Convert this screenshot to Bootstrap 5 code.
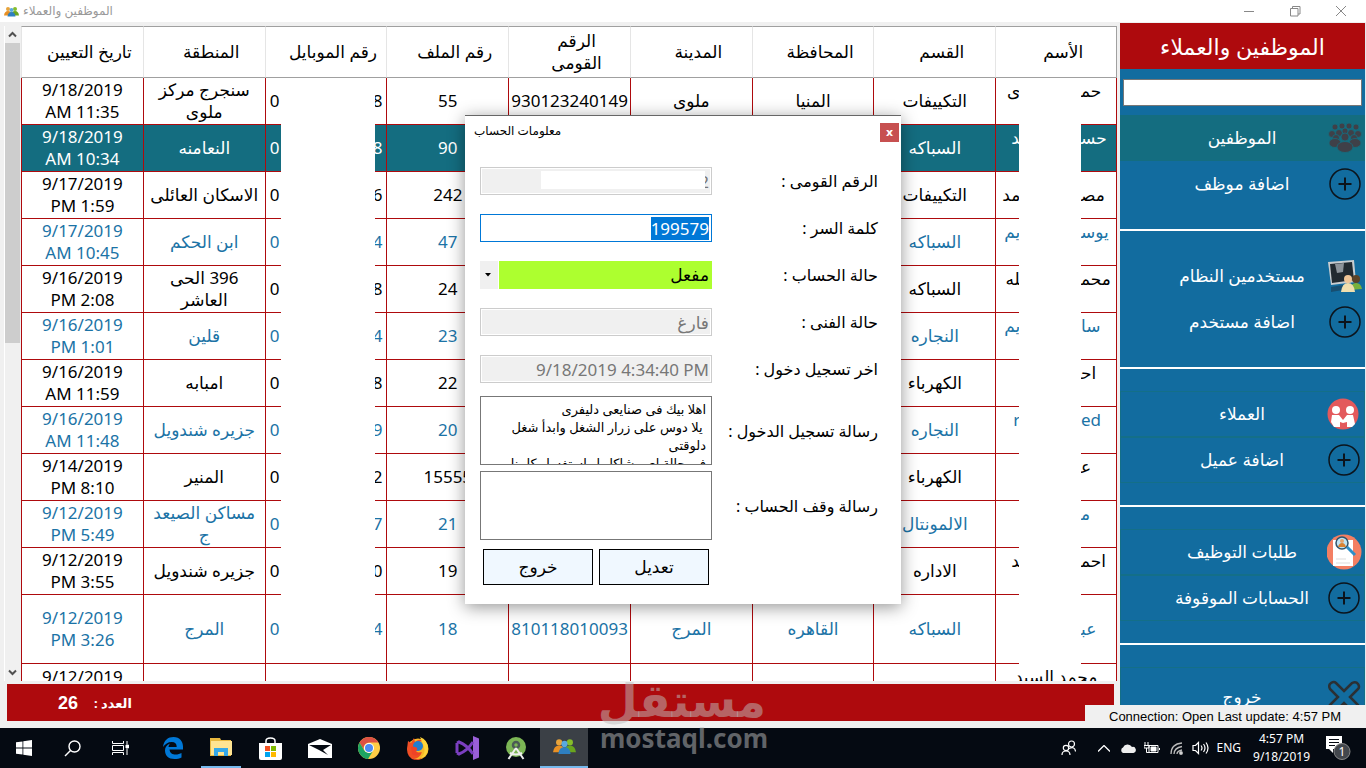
<!DOCTYPE html>
<html lang="ar">
<head>
<meta charset="utf-8">
<meta name="viewport" content="width=device-width, initial-scale=1">
<title>الموظفين والعملاء</title>
<link href="https://cdn.jsdelivr.net/npm/bootstrap@5.3.0/dist/css/bootstrap.min.css" rel="stylesheet">
<style>
:root{--brand-red:#ae0a0d;--brand-blue:#126c9f;--brand-teal:#146d80;--chrome:#f0f0f0}
body{font-family:"Noto Sans","DejaVu Sans",sans-serif;font-size:16px;line-height:22px;background:var(--chrome);color:#000}
svg{display:block;flex:none}
.title-bar{height:23px;background:#fff;color:#999;font-size:12px}
.title-bar button{width:46px;height:22px;border:0;background:none;padding:0;color:#888}
.window-buttons{padding-right:2px}
.workspace{padding-left:4px}
.grid-pane{padding-top:4px}
.scroll-rail{width:17px;border-left:1px solid #fff;background:var(--chrome);flex:none}
.scroll-rail button{border:0;background:none;padding:0;width:15px;height:17px;color:#505050}
.scroll-thumb{width:15px;height:300px;background:#cdcdcd}
.grid-box{background:#fff;min-width:0;margin-right:3px}
.staff-table{table-layout:fixed;width:100%;border-collapse:separate;border-spacing:0}
.staff-table th{height:52px;font-weight:400;font-size:17px;line-height:22px;padding:0 8px 0 22px;text-align:center;border-top:1px solid #a0a0a0;border-bottom:1px solid #a0a0a0;border-left:1px solid #e5e5e5}
.staff-table td{height:47px;padding:0 4px;font-size:17px;line-height:22px;text-align:center;vertical-align:middle;overflow:hidden;border-bottom:1px solid var(--brand-red);border-left:1px solid var(--brand-red)}
.staff-table th:first-child{border-right:1px solid #a0a0a0}
.staff-table td:first-child{border-right:1px solid var(--brand-red)}
.staff-table tr:nth-child(even) td{color:#1b73a6}
.staff-table tr.picked td{background:var(--brand-teal);color:#fff}
.staff-table tr.roomy td{height:69px}
.staff-table td.fit,.staff-table td.name-cell{padding:0;white-space:nowrap}
.staff-table td.upper,.staff-table tr.final td{vertical-align:top;padding-top:2px}
.name-end{width:35px;text-align:left}
.name-start{width:24px;text-align:right}
.masked{position:absolute;background:#fff}
.masked-phone{left:260px;width:94px;top:60px;bottom:22px}
.masked-name{right:36px;width:62px;top:58px;bottom:12px}
.count-bar{flex:none;margin:3px 6px 7px 3px;height:37px;background:var(--brand-red);color:#fff;font-weight:700;padding-left:51px}
.count-bar output{font:700 18px/22px "Liberation Sans",sans-serif}
.count-bar label{font-size:13px}
.side-pane{width:246px;margin-top:1px;background:var(--brand-blue);border-right:1px solid #dfe8ee}
.side-pane h1{height:46px;line-height:46px;font-size:22px;font-weight:400;background:var(--brand-red);color:#fff}
.side-search{width:calc(100% - 6px);height:27px;border:1px solid #777;margin:10px 3px 9px;display:block}
.side-group{padding-bottom:22px;border-bottom:2px solid #fff}
.side-group + .side-group{padding-top:22px}
.side-link{height:46px;color:#fff;text-decoration:none;font-size:17px;border:1px solid transparent}
.side-link:hover{color:#fff}
.side-link.on{background:var(--brand-teal)}
.side-link.lined{border-color:#146f88}
.side-link span{flex:1;text-align:center;padding-right:2px}
.side-link svg{width:36px;margin-right:1px}
.side-link::after{content:"";width:38px}
.side-exit{height:60px;margin-top:22px}
.status-note{position:absolute;right:0;bottom:0;height:23px;padding:0 25px 0 24px;background:var(--chrome);font:13px/23px "Liberation Sans",sans-serif}
.account-layer{position:absolute;inset:115px 0 auto 0;pointer-events:none}
.account-box{pointer-events:auto;width:436px;background:#fff;border-top:1px solid #666;box-shadow:0 3px 16px rgba(0,0,0,.42);padding:7px 0 19px}
.account-head{height:44px;padding-left:9px}
.account-head h2{font-size:12px;line-height:16px;font-weight:400}
.account-head button{width:19px;height:19px;background:#c75050;color:#fff;border:0;padding:0;margin-right:2px;font:700 11px/16px "DejaVu Sans",sans-serif}
.account-form{padding:0 23px 0 15px}
.field-row{display:grid;grid-template-columns:minmax(0,1fr) 232px;align-items:center;margin-bottom:19px}
.field-row.snug{margin-bottom:13px}
.field-row.tall{margin-bottom:6px}
.field-row label{font-size:16px;white-space:nowrap}
.field-row input,.field-row select{width:100%;height:28px;border:1px solid #ccc;border-radius:0;padding:0 2px;font-size:17px;line-height:22px;outline:0;text-align:right}
.field-row input:disabled{background:#f0f0f0;color:#777;box-shadow:inset 0 0 0 1px #fff}
.field-row input.live{border-color:#0078d7}
.field-row input::selection{background:#0078d7;color:#fff}
.field-row select{appearance:none;border:0;background:#adff2f;border-left:18px solid var(--chrome);padding:0 3px;box-shadow:inset 1px 0 #fff}
.field-row textarea{width:100%;height:69px;border:1px solid #777;border-radius:0;resize:none;overflow:hidden;padding:3px 5px;font-size:13px;line-height:18px;display:block}
.hidden-digits{position:absolute;background:#fff;left:61px;right:7px;top:4px;height:18px}
.pick-arrow{position:absolute;left:5px;top:12px}
.act-row{gap:6px;padding:3px 0 0 3px}
.account-form .act{width:110px;height:36px;border:1px solid #000;background:#f0f8ff;font-size:17px}
.task-bar{height:40px;background:#050a12;color:#fff;font:12px/18px "Noto Sans",sans-serif}
.task-bar button{width:49px;height:40px;border:0;background:none;padding:0;color:#fff;display:flex;align-items:center;justify-content:center}
.task-bar button.shell{width:48px}
.task-bar button.open{width:40px;margin:0 5px 0 4px;border-bottom:2px solid #76b9ed}
.task-bar button.current{width:48px;background:#3b4046;border-bottom:2px solid #76b9ed}
.task-bar .tray button{width:24px}
.watermark{position:absolute;left:600px;bottom:16px;width:166px;color:rgba(190,190,190,.5);pointer-events:none;font-weight:700}
.watermark .wm-ar{font-size:46px;line-height:50px}
.watermark .wm-en{font:700 26px/28px "Noto Sans",sans-serif}
</style>
</head>
<body class="vh-100 d-flex flex-column overflow-hidden position-relative">

<header class="title-bar d-flex align-items-center">
  <svg class="ms-1" width="15" height="11" viewBox="0 0 30 20"><circle cx="8" cy="5" r="4" fill="#e8a33a"/><path d="M0 18q1-9 8-9t8 9z" fill="#e89024"/><circle cx="22" cy="5" r="4" fill="#86bd2a"/><path d="M14 18q1-9 8-9t8 9z" fill="#6aa51e"/><circle cx="15" cy="7" r="4" fill="#5aa9de"/><path d="M7 20q1-9 8-9t8 9z" fill="#2e7fc0"/></svg>
  <span class="ms-1" dir="rtl">الموظفين والعملاء</span>
  <div class="window-buttons ms-auto d-flex">
    <button aria-label="تصغير"><svg class="mx-auto" width="10" height="10"><path d="M0 5.500h10" stroke="currentColor"/></svg></button>
    <button aria-label="استعادة"><svg class="mx-auto" width="11" height="11" fill="none" stroke="currentColor"><path d="M.5 2.500h7.500v7.500H.5zM2.500 2.500v-2h7.500v7.500H8"/></svg></button>
    <button aria-label="اغلاق"><svg class="mx-auto" width="10" height="10" stroke="currentColor"><path d="M0 0l10 10M10 0L0 10"/></svg></button>
  </div>
</header>

<main class="workspace flex-grow-1 d-flex overflow-hidden position-relative">
  <section class="grid-pane flex-grow-1 d-flex flex-column overflow-hidden">
    <div class="d-flex flex-grow-1 overflow-hidden">
      <div class="scroll-rail d-flex flex-column">
        <button aria-label="اعلى"><svg class="mx-auto" width="9" height="7" fill="none" stroke="currentColor" stroke-width="2"><path d="M1 5.500l3.500-3.500L8 5.500"/></svg></button>
        <div class="scroll-thumb"></div>
        <button class="mt-auto" aria-label="اسفل"><svg class="mx-auto" width="9" height="7" fill="none" stroke="currentColor" stroke-width="2"><path d="M1 1.500L4.500 5 8 1.500"/></svg></button>
      </div>
      <div class="grid-box flex-grow-1 overflow-hidden position-relative">
        <table class="staff-table" dir="rtl">
          <thead><tr><th>الأسم</th><th>القسم</th><th>المحافظة</th><th>المدينة</th><th>الرقم القومى</th><th>رقم الملف</th><th>رقم الموبايل</th><th>المنطقة</th><th>تاريخ التعيين</th></tr></thead>
          <tbody id="staff"></tbody>
        </table>
        <div class="masked masked-phone"></div>
        <div class="masked masked-name"></div>
      </div>
    </div>
    <div class="count-bar d-flex align-items-center">
      <output id="total">26</output>
      <label for="total" class="ms-3" dir="rtl">العدد :</label>
    </div>
  </section>

  <aside class="side-pane flex-shrink-0 overflow-hidden" dir="rtl">
    <h1 class="m-0 text-center">الموظفين والعملاء</h1>
    <input class="side-search" type="text" aria-label="بحث">
    <nav>
      <div class="side-group">
        <a href="#" class="side-link on d-flex align-items-center"><svg height="30" viewBox="0 0 36 30" fill="#3f4048" stroke="#146d80" stroke-width=".8"><circle cx="8" cy="4" r="3"/><circle cx="15" cy="3" r="3"/><circle cx="22" cy="3" r="3"/><circle cx="29" cy="4" r="3"/><circle cx="5" cy="11" r="3.500"/><circle cx="12" cy="10" r="3.500"/><circle cx="24" cy="10" r="3.500"/><circle cx="31" cy="11" r="3.500"/><circle cx="18" cy="8" r="3"/><circle cx="18" cy="14" r="4"/><circle cx="9" cy="15" r="3.500"/><circle cx="27" cy="15" r="3.500"/><ellipse cx="8" cy="20" rx="6" ry="4.500"/><ellipse cx="28" cy="20" rx="6" ry="4.500"/><ellipse cx="18" cy="24" rx="8" ry="5.500"/></svg><span>الموظفين</span></a>
        <a href="#" class="side-link d-flex align-items-center"><svg height="32" viewBox="0 0 36 32" fill="none" stroke="#0c141c" stroke-width="1.500"><circle cx="18" cy="16" r="15"/><path d="M18 9.500v13M11.500 16h13" stroke-width="2"/></svg><span>اضافة موظف</span></a>
      </div>
      <div class="side-group">
        <a href="#" class="side-link d-flex align-items-center"><svg height="34" viewBox="0 0 36 34"><path d="M1 3l26-2 2 22-25 3z" fill="#c8cdd0"/><path d="M3 5l22-2 2 18-22 3z" fill="#222a30"/><path d="M8 5l9-1-1 9-6 1z" fill="#8d949a"/><path d="M4 28l12-2v5l-12 2z" fill="#174e70"/><circle cx="29" cy="20" r="4" fill="#5c4328"/><path d="M23 31q1-7 6-7t6 6z" fill="#79b23c"/><circle cx="21" cy="20" r="4" fill="#efc596"/><path d="M14 33q1-9 7-9t7 9z" fill="#f0dfae"/></svg><span>مستخدمين النظام</span></a>
        <a href="#" class="side-link d-flex align-items-center"><svg height="32" viewBox="0 0 36 32" fill="none" stroke="#0c141c" stroke-width="1.500"><circle cx="18" cy="16" r="15"/><path d="M18 9.500v13M11.500 16h13" stroke-width="2"/></svg><span>اضافة مستخدم</span></a>
      </div>
      <div class="side-group">
        <a href="#" class="side-link lined d-flex align-items-center"><svg height="32" viewBox="0 0 36 32"><circle cx="16" cy="16" r="15.500" fill="#e3595c"/><g fill="#fff"><circle cx="9" cy="12" r="4"/><circle cx="23" cy="12" r="4"/><path d="M5 17h7l4 5 4-5h6l2 9-3 3h-5v-5l-4 1-3-1v5H7l-3-5z"/></g></svg><span>العملاء</span></a>
        <a href="#" class="side-link lined d-flex align-items-center"><svg height="32" viewBox="0 0 36 32" fill="none" stroke="#0c141c" stroke-width="1.500"><circle cx="17" cy="16" r="15"/><path d="M17 9.500v13M10.500 16h13" stroke-width="2"/></svg><span>اضافة عميل</span></a>
      </div>
      <div class="side-group">
        <a href="#" class="side-link lined d-flex align-items-center"><svg height="36" viewBox="0 0 36 36"><circle cx="17" cy="18" r="17.500" fill="#f37f63"/><path d="M6 6h20v26H6z" fill="#fff"/><path d="M9 25h10M9 29h14" stroke="#ddd"/><circle cx="15" cy="9" r="6" fill="#bfe4f4" stroke="#31536b" stroke-width="1.500"/><circle cx="15" cy="7" r="2" fill="#e5a36d"/><path d="M11 13q1-4 4-4t4 4z" fill="#d98232"/><path d="M20 13l8 8" stroke="#2c8fc9" stroke-width="3"/></svg><span>طلبات التوظيف</span></a>
        <a href="#" class="side-link lined d-flex align-items-center"><svg height="32" viewBox="0 0 36 32" fill="none" stroke="#0c141c" stroke-width="1.500"><circle cx="17" cy="16" r="15"/><path d="M17 9.500v13M10.500 16h13" stroke-width="2"/></svg><span>الحسابات الموقوفة</span></a>
      </div>
      <a href="#" class="side-link lined side-exit d-flex align-items-center"><svg height="34" viewBox="0 0 36 34" fill="none" stroke="#2b3034" stroke-width="2.500"><path d="M17 11l8-8q4-2 6 1t0 5l-8 8 8 8q2 4-1 6t-5 0l-8-8-8 8q-4 2-6-1t0-5l8-8-8-8q-2-4 1-6t5 0z"/></svg><span>خروج</span></a>
    </nav>
  </aside>
  <div class="status-note">Connection: Open Last update: 4:57 PM</div>
</main>

<footer class="task-bar d-flex align-items-center flex-shrink-0">
  <button class="shell" aria-label="Start"><svg width="16" height="16" fill="#fff"><path d="M0 2.300L6.500 1.400V7.600H0zM7.300 1.300L16 0v7.600H7.300zM0 8.400h6.500v6.200L0 13.700zM7.300 8.400H16V16l-8.700-1.300z"/></svg></button>
  <button class="shell" aria-label="Search"><svg width="17" height="17" fill="none" stroke="#fff" stroke-width="1.400"><circle cx="10.500" cy="6.500" r="5.500"/><path d="M6.500 10.500L1 16"/></svg></button>
  <button class="shell" aria-label="Task view"><svg width="17" height="16" fill="none" stroke="#fff"><path d="M.5 1v2.500h11V1M.5 15v-2.500h11V15M.5 5.500h11v5H.5zM15 1v3M15 9v6"/><path d="M14 5h2.500v3H14z" fill="#fff"/></svg></button>
  <button class="ms-1" aria-label="Edge"><svg width="20" height="22" viewBox="0 0 20 22"><path d="M0 10C1 3 5 0 10.500 0 17 0 20 5 20 9.500V12.500H6.500c.4 4 3.200 5 6 5 2.400 0 4.500-.6 6-1.500v4.500c-2 1-4.500 1.500-7 1.500C5.500 22 2 18.500 2 13.500c0-3 1.500-5.500 5-7-1 1.300-1.300 2.300-1.500 3.500h8.200c0-3.500-1.700-5-5-5C5 5 2 7 0 10z" fill="#0078d7"/></svg></button>
  <button class="open" aria-label="Explorer"><svg width="22" height="18" viewBox="0 0 22 18"><path d="M0 0h10l1 2h10v16H0z" fill="#e8b83f"/><path d="M1 3h21v14H1z" fill="#ffe492"/><path d="M4 10h14v8h-4v-4H8v4H4z" fill="#35a8e8"/></svg></button>
  <button aria-label="Store"><svg width="23" height="23" viewBox="0 0 23 23"><path d="M7 7V4q0-3 4.500-3T16 4v3" fill="none" stroke="#fff" stroke-width="1.500"/><path d="M0 6h23v15q0 2-2 2H2q-2 0-2-2z" fill="#fff"/><path d="M6 9h5v5H6z" fill="#f25022"/><path d="M12 9h5v5h-5z" fill="#7fba00"/><path d="M6 15h5v5H6z" fill="#00a4ef"/><path d="M12 15h5v5h-5z" fill="#ffb900"/></svg></button>
  <button aria-label="Mail"><svg width="24" height="19" viewBox="0 0 24 19"><path d="M0 5l12-5 12 5v14H0z" fill="#fff"/><path d="M1 6h22l-8 5 5 5-9-5z" fill="#050a12"/></svg></button>
  <button aria-label="Chrome"><svg width="22" height="22" viewBox="0 0 22 22"><circle cx="11" cy="11" r="11" fill="#ffcd46"/><path d="M1.500 5.500A11 11 0 0 1 20.500 5.500H11A5.500 5.500 0 0 0 6 13z" fill="#dd5144"/><path d="M1.500 5.500A11 11 0 0 0 10 22l5-8A5.500 5.500 0 0 1 6 13z" fill="#1da462"/><circle cx="11" cy="11" r="5" fill="#fff"/><circle cx="11" cy="11" r="4" fill="#4c8bf5"/></svg></button>
  <button aria-label="Firefox"><svg width="23" height="23" viewBox="0 0 23 23"><circle cx="12" cy="12" r="10.500" fill="#f9b827"/><path d="M2 4l3 2 3-5 1 4q5-4 7-1-5 1-4 4 3 4-2 6 2 3 6 1-2 6-8 7 6 1 10-3-4 5-9 4Q1 21 1 12z" fill="#f04e25"/><circle cx="12" cy="9" r="5" fill="#217dd1"/><path d="M14 0q8 3 8 11t-7 10q5-5 3-11T14 0z" fill="#ffd43a"/><path d="M5 10q4-1 6 1 1 2-2 3 2 3 6 1-4 6-9 2z" fill="#ee4327"/></svg></button>
  <button aria-label="Visual Studio"><svg width="24" height="24" viewBox="0 0 24 24"><path d="M18 0l6 2.500v19L18 24z" fill="#9a5fd8"/><path d="M2 7l2-1q8 3 14 12M2 17l2 1q8-3 14-12M2 7v10" fill="none" stroke="#7b3fc0" stroke-width="3"/></svg></button>
  <button aria-label="Android Studio"><svg width="20" height="23" viewBox="0 0 20 23"><circle cx="10" cy="10" r="10" fill="#7cb655"/><circle cx="10" cy="8" r="3" fill="#7cb655" stroke="#4a5a55" stroke-width="2.500"/><path d="M10 11L2.500 22M10 11l7.500 11M4 16q6 3 12 0" fill="none" stroke="#eee" stroke-width="2"/></svg></button>
  <button class="current" aria-label="الموظفين والعملاء"><svg width="23" height="16" viewBox="0 0 30 20"><circle cx="8" cy="4" r="4" fill="#e8a33a"/><path d="M0 17q1-9 8-9t8 9z" fill="#e89024"/><circle cx="22" cy="4" r="4" fill="#86bd2a"/><path d="M14 17q1-9 8-9t8 9z" fill="#6aa51e"/><circle cx="15" cy="6" r="4" fill="#5aa9de"/><path d="M7 19q1-9 8-9t8 9z" fill="#2e7fc0"/></svg></button>
  <div class="tray ms-auto d-flex align-items-center">
    <button class="me-2" aria-label="People"><svg width="15" height="16" fill="none" stroke="#fff" stroke-width="1.200"><circle cx="10.500" cy="4" r="3"/><circle cx="5" cy="8" r="2.700"/><path d="M1 15q0-4 4-4t4 4M8 8.500q6-2.500 6.500 3"/></svg></button>
    <button class="ms-1" aria-label="Show hidden"><svg width="12" height="7" fill="none" stroke="#fff" stroke-width="1.300"><path d="M0 6.500l6-6 6 6"/></svg></button>
    <button aria-label="OneDrive"><svg width="16" height="10" fill="#eee"><path d="M3 10a3 3 0 0 1 0-5.500A5 5 0 0 1 12 4a3 3 0 0 1 1.500 6z"/></svg></button>
    <button aria-label="Battery"><svg width="16" height="12" fill="none" stroke="#fff"><path d="M5 3.500h9v7H5zM15.500 6v2M1 0v3M4 0v3M0 3.500h5V6H0zM2.500 6v4.500H5"/><path d="M7 5h5v4H7z" fill="#fff"/></svg></button>
    <button aria-label="Network"><svg width="13" height="13" fill="none" stroke="#bbb" stroke-width="1.300"><path d="M1 12Q1 2 12 1M4 12q0-6 8-7.500M7 12q0-3 5-4"/><circle cx="11" cy="11" r="1.300" fill="#fff"/></svg></button>
    <button aria-label="Volume"><svg width="17" height="14" fill="none" stroke="#fff" stroke-width="1.200"><path d="M1 4.500h2.500l3-3v11l-3-3H1zM9 4.500q2 2.500 0 5M11.500 3q3 4 0 8M14 1.500q4 5.500 0 11"/></svg></button>
    <span class="mx-1">ENG</span>
    <div class="text-center ms-2">4:57 PM<br>9/18/2019</div>
    <button class="ms-3 me-3" aria-label="Notifications"><svg width="25" height="24" viewBox="0 0 25 24"><path d="M0 0h16v13H7v4l-4-4H0z" fill="#fff"/><path d="M3 3.500h10M3 6.500h10M3 9.500h6" stroke="#050a12"/><circle cx="16" cy="15.500" r="8" fill="#43474d" stroke="#888"/><text x="16" y="20" fill="#fff" font-size="12" text-anchor="middle">1</text></svg></button>
  </div>
</footer>

<div class="account-layer d-flex justify-content-center">
  <section class="account-box" role="dialog" aria-labelledby="accountTitle">
    <div class="account-head d-flex justify-content-between align-items-start">
      <h2 id="accountTitle" class="m-0">معلومات الحساب</h2>
      <button aria-label="اغلاق">x</button>
    </div>
    <form class="account-form" dir="rtl">
      <div class="field-row"><label for="natId">الرقم القومى :</label><div class="position-relative"><input id="natId" value="2" disabled><div class="hidden-digits"></div></div></div>
      <div class="field-row"><label for="pass">كلمة السر :</label><input id="pass" class="live" value="199579"></div>
      <div class="field-row"><label for="state">حالة الحساب :</label><div class="position-relative"><select id="state"><option>مفعل</option></select><svg class="pick-arrow" width="6" height="4"><path d="M0 0h6L3 3.500z"/></svg></div></div>
      <div class="field-row"><label for="tech">حالة الفنى :</label><input id="tech" value="فارغ" disabled></div>
      <div class="field-row snug"><label for="last">اخر تسجيل دخول :</label><input id="last" dir="ltr" value="9/18/2019 4:34:40 PM" disabled></div>
      <div class="field-row tall"><label for="hello">رسالة تسجيل الدخول :</label><textarea id="hello">اهلا بيك فى صنايعى دليفرى
 يلا دوس على زرار الشغل وابدأ شغل دلوقتى
فى حالة اى مشاكل او استفسار كلمنا</textarea></div>
      <div class="field-row tall"><label for="stop">رسالة وقف الحساب :</label><textarea id="stop"></textarea></div>
      <div class="act-row d-flex justify-content-end">
        <button type="button" class="act">تعديل</button>
        <button type="button" class="act">خروج</button>
      </div>
    </form>
  </section>
</div>

<div class="watermark text-center" aria-hidden="true">
  <div class="wm-ar" dir="rtl">مستقل</div>
  <div class="wm-en">mostaql.com</div>
</div>

<script src="https://cdn.jsdelivr.net/npm/bootstrap@5.3.0/dist/js/bootstrap.bundle.min.js"></script>
<script>
// name parts, section, governorate, city, id, file no., last phone digit, area, date, time
const staff = [
  ['حم~','ى','التكييفات','المنيا','ملوى','930123240149','55','8','سنجرج مركز ملوى','9/18/2019','AM 11:35'],
  ['حس~','~د','السباكه','','','','90','8','النعامنه','9/18/2019','AM 10:34'],
  ['مص~','مد','التكييفات','','','','242','6','الاسكان العائلى','9/17/2019','PM 1:59'],
  ['يوس~','يم','السباكه','','','','47','4','ابن الحكم','9/17/2019','AM 10:45'],
  ['محم~','~له','السباكه','','','','24','8','396 الحى العاشر','9/16/2019','PM 2:08'],
  ['سا','يم','النجاره','','','','23','4','قلين','9/16/2019','PM 1:01'],
  ['اح~','','الكهرباء','','','','22','8','امبابه','9/16/2019','AM 11:59'],
  ['ed','r','النجاره','','','','20','9','جزيره شندويل','9/16/2019','AM 11:48'],
  ['ع~','','الكهرباء','','','','15555','2','المنير','9/14/2019','PM 8:10'],
  ['م~','','الالمونتال','','','','21','7','مساكن الصيعد ج','9/12/2019','PM 5:49'],
  ['احم~','~د','الاداره','','','','19','0','جزيره شندويل','9/12/2019','PM 3:55'],
  ['عب~','','السباكه','القاهره','المرج','810118010093','18','4','المرج','9/12/2019','PM 3:26'],
  ['محمد السيد','','','','','','','','','9/12/2019','']
];
// "~" marks a letter that joins to the masked part of the name
const joined = s => s.replace('~', '\u200d');
document.getElementById('staff').innerHTML = staff.map((r, i) => {
  const last = i === staff.length - 1;
  const name = last ? r[0] : `<div class="d-flex justify-content-between"><span class="name-end">${joined(r[0])}</span><span class="name-start">${joined(r[1])}</span></div>`;
  const phone = r[7] ? `<div class="d-flex justify-content-between" dir="ltr"><span>0</span><span>${r[7]}</span></div>` : '';
  return `<tr class="${i === 1 ? 'picked' : i === 11 ? 'roomy' : last ? 'final' : ''}">
    <td class="name-cell ${i === 2 || i === 11 ? '' : 'upper'}">${name}</td><td>${r[2]}</td><td>${r[3]}</td><td>${r[4]}</td>
    <td class="fit" dir="ltr">${r[5]}</td><td>${r[6]}</td><td>${phone}</td><td>${r[8]}</td>
    <td dir="ltr">${r[9]}${r[10] ? '<br>' + r[10] : ''}</td></tr>`;
}).join('');
const pass = document.getElementById('pass');
pass.focus();
pass.select();
</script>
</body>
</html>
